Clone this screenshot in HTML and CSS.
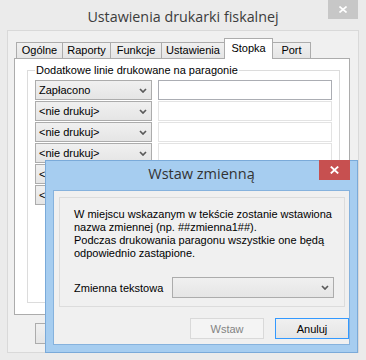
FILE: index.html
```html
<!DOCTYPE html>
<html lang="pl">
<head>
    <meta charset="UTF-8">
    <title>Ustawienia drukarki fiskalnej</title>
    <link rel="stylesheet" href="styles.css">
</head>
<body>
    <div class="window">
        <div class="titlebar">
            <span class="title">Ustawienia drukarki fiskalnej</span>
            <button class="close close-inactive" aria-label="Zamknij">
                <svg width="8" height="7" viewBox="0 0 8 7"><path d="M0.5 0.5 L7.5 6.5 M7.5 0.5 L0.5 6.5" stroke="#fff" stroke-width="1.6" fill="none"/></svg>
            </button>
        </div>
        <div class="client">
            <div class="tabs">
                <div class="tab tab-ogolne">Ogólne</div>
                <div class="tab tab-raporty">Raporty</div>
                <div class="tab tab-funkcje">Funkcje</div>
                <div class="tab tab-ustawienia">Ustawienia</div>
                <div class="tab tab-stopka selected">Stopka</div>
                <div class="tab tab-port">Port</div>
            </div>
            <div class="panel">
                <fieldset class="group">
                    <legend>Dodatkowe linie drukowane na paragonie</legend>
                    <div class="lines">
                        <div class="combo"><span>Zapłacono</span><svg width="8" height="5" viewBox="0 0 8 5"><path d="M1 1 L4 4 L7 1" stroke="#5a5a5a" stroke-width="1.7" fill="none"/></svg></div>
                        <div class="field field-active"></div>
                        <div class="combo"><span>&lt;nie drukuj&gt;</span><svg width="8" height="5" viewBox="0 0 8 5"><path d="M1 1 L4 4 L7 1" stroke="#5a5a5a" stroke-width="1.7" fill="none"/></svg></div>
                        <div class="field"></div>
                        <div class="combo"><span>&lt;nie drukuj&gt;</span><svg width="8" height="5" viewBox="0 0 8 5"><path d="M1 1 L4 4 L7 1" stroke="#5a5a5a" stroke-width="1.7" fill="none"/></svg></div>
                        <div class="field"></div>
                        <div class="combo"><span>&lt;nie drukuj&gt;</span><svg width="8" height="5" viewBox="0 0 8 5"><path d="M1 1 L4 4 L7 1" stroke="#5a5a5a" stroke-width="1.7" fill="none"/></svg></div>
                        <div class="field"></div>
                        <div class="combo"><span>&lt;nie drukuj&gt;</span><svg width="8" height="5" viewBox="0 0 8 5"><path d="M1 1 L4 4 L7 1" stroke="#5a5a5a" stroke-width="1.7" fill="none"/></svg></div>
                        <div class="field"></div>
                        <div class="combo"><span>&lt;nie drukuj&gt;</span><svg width="8" height="5" viewBox="0 0 8 5"><path d="M1 1 L4 4 L7 1" stroke="#5a5a5a" stroke-width="1.7" fill="none"/></svg></div>
                        <div class="field"></div>
                    </div>
                </fieldset>
            </div>
            <div class="footer">
                <button class="btn btn-ok">OK</button>
            </div>
        </div>
    </div>

    <!-- okno modalne nad ustawieniami -->
    <div class="dialog">
        <div class="dialog-title">Wstaw zmienną</div>
        <button class="close close-active" aria-label="Zamknij">
            <svg width="9" height="8" viewBox="0 0 9 8"><path d="M0.8 0.6 L8.2 7.4 M8.2 0.6 L0.8 7.4" stroke="#fff" stroke-width="1.9" fill="none"/></svg>
        </button>
        <div class="dialog-client">
            <div class="dialog-group">
                <p class="info">W miejscu wskazanym w tekście zostanie wstawiona<br>nazwa zmiennej (np. ##zmienna1##).<br>Podczas drukowania paragonu wszystkie one będą<br>odpowiednio zastąpione.</p>
                <div class="var-row">
                    <label class="var-label">Zmienna tekstowa</label>
                    <div class="combo combo-var"><span></span><svg width="8" height="5" viewBox="0 0 8 5"><path d="M1 1 L4 4 L7 1" stroke="#5a5a5a" stroke-width="1.7" fill="none"/></svg></div>
                </div>
            </div>
            <div class="dialog-buttons">
                <button class="btn" disabled>Wstaw</button>
                <button class="btn btn-default">Anuluj</button>
            </div>
        </div>
    </div>
</body>
</html>
```

FILE: styles.css
```css
* { box-sizing: border-box; }
body {
    margin: 0;
    width: 366px;
    height: 360px;
    position: relative;
    overflow: hidden;
    background: #ebebeb;
    font-family: "Liberation Sans", Arial, sans-serif;
    font-size: 11px;
    color: #000;
}

/* glowne okno (nieaktywne) */
.window { height: 360px; padding: 0 7px 7px; display: flex; flex-direction: column; }
.titlebar {
    height: 30px;
    padding-top: 2px;
    display: flex;
    align-items: center;
    justify-content: center;
    font-family: "Open Sans", sans-serif;
    font-size: 14.3px;
    color: #3c3c3c;
}
.close {
    position: absolute;
    top: 0;
    height: 19px;
    border: none;
    padding: 0;
    display: flex;
    align-items: center;
    justify-content: center;
}
.close-inactive { right: 8px; width: 30px; background: #c7c7c7; }
.client { flex: 1; border: 1px solid #d9d9d9; background: #f0f0f0; padding-top: 7px; }

.tabs { display: flex; align-items: flex-end; height: 20px; margin-left: 8px; position: relative; z-index: 1; }
.tab {
    height: 16px;
    margin-right: -1px;
    border: 1px solid #acacac;
    border-bottom: none;
    background: linear-gradient(#f0f0f0, #e5e5e5);
    text-align: center;
    line-height: 14px;
}
.tab.selected { height: 21px; margin-bottom: -1px; padding-top: 2px; background: #fff; position: relative; z-index: 2; }
.tab-ogolne { width: 47px; }
.tab-raporty { width: 49px; }
.tab-funkcje { width: 52px; }
.tab-ustawienia { width: 64px; }
.tab-stopka { width: 49px; }
.tab-port { width: 39px; }

.panel { margin-left: 6px; width: 336px; height: 257px; border: 1px solid #acacac; background: #fff; padding-top: 5px; }
.group {
    margin: 0 0 0 12px;
    width: 312px;
    height: 239px;
    padding: 0 7px;
    border: 1px solid #dcdcdc;
}
.group legend { padding: 0 1px; line-height: 13px; }
.lines { display: grid; grid-template-columns: 117px 174px; grid-auto-rows: 20px; column-gap: 6px; row-gap: 1px; padding-top: 3px; }

.combo {
    display: flex;
    align-items: center;
    justify-content: space-between;
    padding: 0 4px 0 3px;
    border: 1px solid #acacac;
    background: linear-gradient(#f0f0f0, #e5e5e5);
    white-space: nowrap;
}
.field { border: 1px solid #e3e3e3; background: #fff; }
.field-active { border-color: #abadb3; }

.footer { padding: 8px 0 0 27px; }
.btn {
    height: 21px;
    border: 1px solid #acacac;
    background: linear-gradient(#f0f0f0, #e5e5e5);
    font-family: "Liberation Sans", Arial, sans-serif;
    font-size: 11px;
    color: #000;
    padding: 0;
}
.btn-ok { width: 75px; }
.btn:disabled { border-color: #d9d9d9; background: #f4f4f4; color: #838383; }
.btn-default { border-color: #3399ff; }

/* okno dialogowe */
.dialog {
    position: absolute;
    left: 45px;
    top: 160px;
    width: 313px;
    height: 193px;
    display: flex;
    flex-direction: column;
    padding: 0 7px 7px;
    border: 1px solid #7aaad9;
    background: #a6cdf0;
}
.dialog-title {
    height: 29px;
    padding-bottom: 5px;
    display: flex;
    align-items: center;
    justify-content: center;
    font-family: "Open Sans", sans-serif;
    font-size: 14.5px;
    color: #333;
}
.close-active { top: -1px; right: 7px; width: 31px; height: 20px; background: #c75050; }
.dialog-client { flex: 1; border: 1px solid #86b2dd; background: #f0f0f0; padding: 0 5px 0 5px; }
.dialog-group { margin-top: 6px; width: 286px; height: 110px; border: 1px solid #dcdcdc; padding: 10px 0 0 14px; }
.info { margin: 0; line-height: 13px; }
.var-row { display: flex; align-items: center; margin-top: 17px; }
.var-label { width: 98px; }
.combo-var { width: 162px; height: 21px; }
.dialog-buttons { display: flex; justify-content: flex-end; gap: 11px; margin-top: 11px; width: 290px; }
.dialog-buttons .btn { width: 74px; }
```
